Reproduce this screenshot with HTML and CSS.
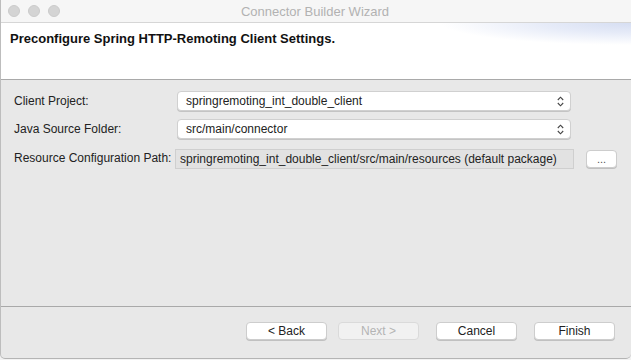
FILE: index.html
```html
<!DOCTYPE html>
<html lang="en">
<head>
  <meta charset="UTF-8" />
  <title>Connector Builder Wizard</title>
  <link rel="stylesheet" href="styles.css">
</head>
<body>
  <div class="window">
    <!-- 标题栏 -->
    <div class="titlebar">
      <div class="lights">
        <span class="light"></span>
        <span class="light"></span>
        <span class="light"></span>
      </div>
      <div class="win-title">Connector Builder Wizard</div>
    </div>

    <!-- 页头 -->
    <div class="banner">
      <h1>Preconfigure Spring HTTP-Remoting Client Settings.</h1>
    </div>

    <!-- 表单区域 -->
    <div class="content">
      <div class="form">
        <label>Client Project:</label>
        <div class="combo">
          <span>springremoting_int_double_client</span>
          <svg class="arrows" width="7" height="11" viewBox="0 0 7 11">
            <path d="M0.8 4 L3.5 1.2 L6.2 4 M0.8 7 L3.5 9.8 L6.2 7" fill="none" stroke="#444" stroke-width="1.1"/>
          </svg>
        </div>
        <div></div>

        <label>Java Source Folder:</label>
        <div class="combo">
          <span>src/main/connector</span>
          <svg class="arrows" width="7" height="11" viewBox="0 0 7 11">
            <path d="M0.8 4 L3.5 1.2 L6.2 4 M0.8 7 L3.5 9.8 L6.2 7" fill="none" stroke="#444" stroke-width="1.1"/>
          </svg>
        </div>
        <div></div>

        <label>Resource Configuration Path:</label>
        <div class="field">springremoting_int_double_client/src/main/resources (default package)</div>
        <button class="btn small">...</button>
      </div>
    </div>

    <!-- 按钮栏 -->
    <div class="footer">
      <button class="btn">&lt; Back</button>
      <button class="btn next" disabled>Next &gt;</button>
      <button class="btn">Cancel</button>
      <button class="btn">Finish</button>
    </div>
  </div>
</body>
</html>
```

FILE: styles.css
```css
/* 公用样式 */
* {
  box-sizing: border-box;
  margin: 0;
  padding: 0;
}
html, body {
  width: 631px;
  height: 360px;
  overflow: hidden;
  background: #f2f2f2;
}
body {
  font-family: "Liberation Sans", Arial, sans-serif;
  font-size: 12px;
  color: #222;
}

.window {
  width: 631px;
  height: 359px;
  display: flex;
  flex-direction: column;
  background: #e8e8e8;
  border-left: 1px solid #bdbdbd;
  border-bottom: 1px solid #b4b4b4;
  border-radius: 0 0 5px 5px;
  overflow: hidden;
}

/* 标题栏 */
.titlebar {
  height: 23px;
  flex-shrink: 0;
  display: flex;
  align-items: center;
  background: #f6f6f6;
  border-bottom: 1px solid #d6d6d6;
}
.lights {
  display: flex;
  gap: 8px;
  padding-left: 7px;
}
.light {
  width: 12px;
  height: 12px;
  border-radius: 50%;
  background: #d4d4d4;
  border: 1px solid #cbcbcb;
}
.win-title {
  flex: 1;
  text-align: center;
  font-size: 13px;
  color: #b2b2b2;
  margin-right: 61px;
  margin-top: 1px;
}

/* 页头 */
.banner {
  height: 57px;
  flex-shrink: 0;
  background:
    radial-gradient(ellipse 190px 22px at 100% 0, #d6def2 0, #e6ebf8 45%, rgba(255,255,255,0) 100%) no-repeat,
    #fff;
  border-bottom: 1px solid #a9a9a9;
  padding: 8px 0 0 9px;
}
.banner h1 {
  font-size: 13px;
  font-weight: bold;
  color: #111;
}

/* 表单区域 */
.content {
  flex: 1;
  padding: 11px 0 0 13px;
}
.form {
  display: grid;
  grid-template-columns: 149px 399px 30px;
  column-gap: 12px;
  row-gap: 8px;
  align-items: center;
}
.form label {
  white-space: nowrap;
}
.combo {
  height: 20px;
  margin: 0 3px 0 2px;
  display: flex;
  align-items: center;
  justify-content: space-between;
  padding: 0 6px 0 8px;
  background: #fff;
  border: 1px solid #d0d0d0;
  border-radius: 4px;
  box-shadow: 0 1px 0 #c4c4c4;
}
.arrows {
  display: block;
}
.field {
  height: 20px;
  line-height: 18px;
  margin-top: 2px;
  padding-left: 4px;
  background: #e2e2e2;
  border: 1px solid #cfcfcf;
  white-space: nowrap;
  overflow: hidden;
}

/* 按钮 */
.btn {
  font-family: "Liberation Sans", Arial, sans-serif;
  font-size: 12px;
  color: #222;
  width: 81px;
  height: 18px;
  background: #fff;
  border: 1px solid #cdcdcd;
  border-radius: 4px;
  box-shadow: 0 1px 0 #c0c0c0;
}
.btn.small {
  width: 31px;
  height: 18px;
  margin-top: 1px;
  font-size: 11px;
  color: #555;
}
.btn.next {
  background: #f1f1f1;
  color: #b4b4b4;
  border-color: #dadada;
  box-shadow: none;
}

/* 按钮栏 */
.footer {
  height: 52px;
  flex-shrink: 0;
  display: flex;
  align-items: center;
  justify-content: flex-end;
  gap: 17px;
  padding: 0 16px 3px 0;
  border-top: 1px solid #a9a9a9;
}
.footer .next {
  margin-left: -6px;
}
```
